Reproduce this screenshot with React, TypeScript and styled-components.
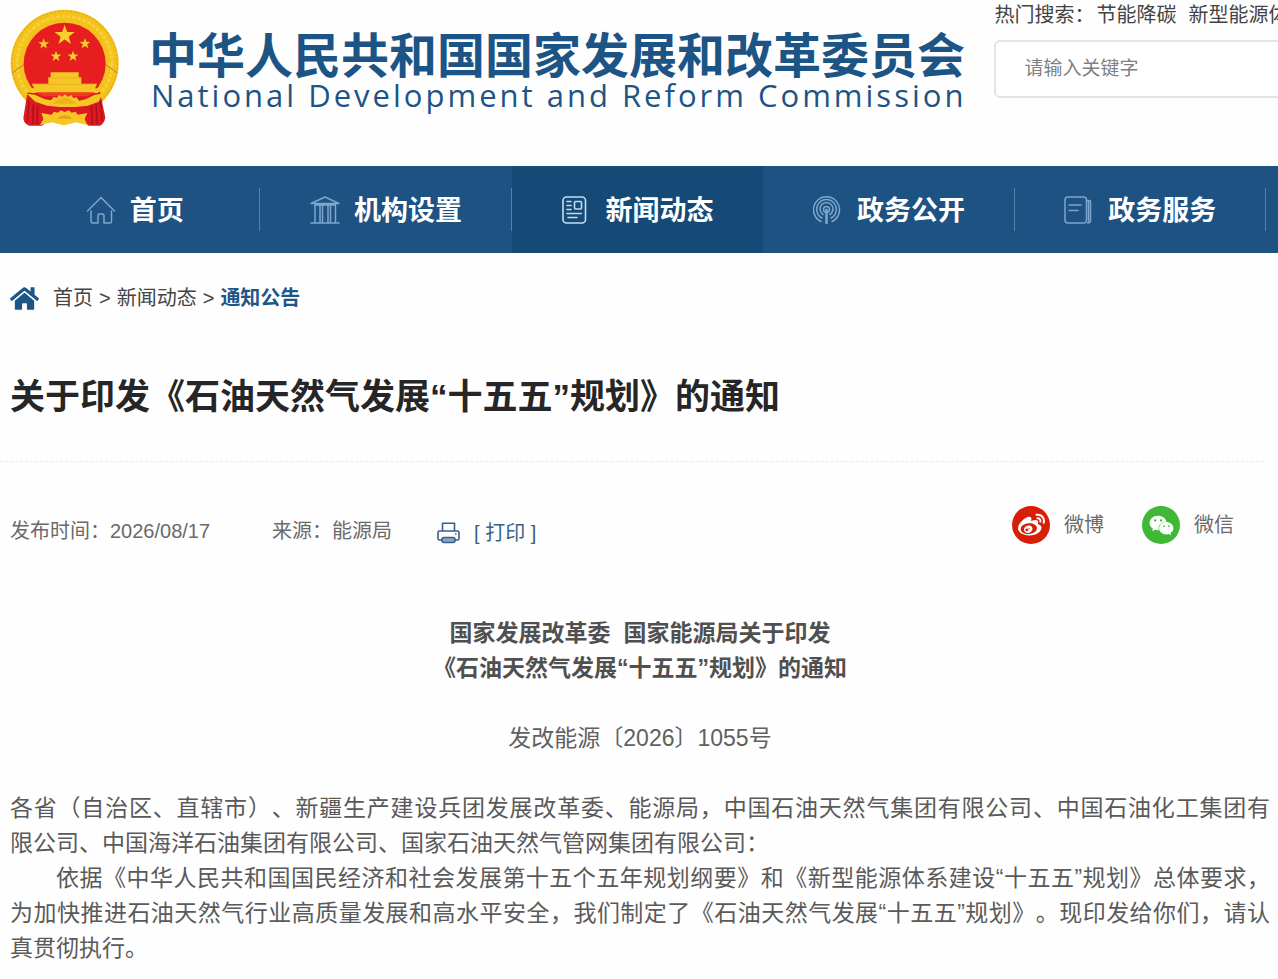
import React from "react";
import styled, { createGlobalStyle } from "styled-components";
import { FaHome, FaWeibo, FaWeixin } from "react-icons/fa";

const GlobalStyle = createGlobalStyle`
  *, *::before, *::after { box-sizing: border-box; }
  body {
    margin: 0;
    background: #fefefe;
    color: #444;
    font-family: "Liberation Sans", "Noto Sans CJK SC", sans-serif;
    text-spacing-trim: space-all;
    overflow-x: hidden;
  }
  a { color: inherit; text-decoration: none; }
  h1, h2, p { margin: 0; }
`;

const Page = styled.div`
  width: 100%;
  overflow: hidden;
`;

const Header = styled.header`
  display: flex;
  align-items: flex-start;
  height: 166px;
  padding-left: 10px;
`;

const Brand = styled.a`
  display: flex;
  flex: none;
  gap: 29px;
  padding-top: 9px;
  color: #1c5486;
`;

const BrandText = styled.div`
  display: flex;
  flex-direction: column;
  padding-top: 22px;
  white-space: nowrap;
`;

const BrandName = styled.span`
  font-size: 48px;
  font-weight: 700;
  line-height: 52px;
`;

const BrandLatin = styled.span`
  padding-left: 2px;
  font-family: "Open Sans", "Noto Sans", sans-serif;
  font-size: 31px;
  line-height: 24px;
  letter-spacing: 3px;
`;

const SearchArea = styled.form`
  flex: 1;
  min-width: 0;
  margin: 2px -10px 0 28px;
`;

const HotWords = styled.div`
  display: flex;
  gap: 12px;
  overflow: hidden;
  font-size: 20px;
  line-height: 26px;
  white-space: nowrap;
  color: #444;
`;

const HotLabel = styled.span`
  margin-right: -10px;
`;

const SearchBox = styled.input`
  display: block;
  width: 100%;
  height: 58px;
  margin-top: 12px;
  padding: 0 28px;
  border: 2px solid #e4e4e4;
  border-radius: 6px;
  background: #fff;
  color: #444;
  font-family: inherit;
  font-size: 19px;
  &::placeholder { color: #808080; opacity: 1; }
`;

const Nav = styled.nav`
  display: flex;
  height: 87px;
  padding: 0 12px 0 9px;
  background: #1d5283;
`;

const NavItem = styled.a<{ $active?: boolean; $divider?: boolean }>`
  position: relative;
  display: flex;
  flex: 1;
  align-items: center;
  justify-content: center;
  gap: 14px;
  background: ${(p) => (p.$active ? "#164a76" : "transparent")};
  color: #fff;
  font-size: 27px;
  font-weight: 700;
  white-space: nowrap;
  svg { color: ${(p) => (p.$active ? "#c3dcf0" : "#7fa6cc")}; }
  &::after {
    content: "";
    display: ${(p) => (p.$divider ? "block" : "none")};
    position: absolute;
    right: 0;
    top: 22px;
    width: 1px;
    height: 43px;
    background: #5482ab;
  }
`;

const NavLabel = styled.span`
  padding-bottom: 3px;
`;

const Main = styled.main`
  padding: 0 8px 12px 10px;
`;

const Breadcrumb = styled.nav`
  display: flex;
  align-items: center;
  gap: 14px;
  padding-top: 30px;
  font-size: 20px;
  line-height: 30px;
  svg { color: #1c5687; }
`;

const Trail = styled.span`
  display: flex;
  gap: 6px;
`;

const Current = styled.a`
  color: #1c5687;
  font-weight: 700;
`;

const Title = styled.h1`
  padding: 58px 0 38px;
  color: #262626;
  font-size: 35px;
  line-height: 52px;
`;

const Rule = styled.hr`
  margin: 0 6px 0 -10px;
  border: 0;
  border-top: 1px dashed #eaeaea;
`;

const MetaBar = styled.div`
  display: flex;
  justify-content: space-between;
  padding-top: 44px;
  font-size: 20px;
  line-height: 38px;
  color: #6a6a6a;
`;

const MetaInfo = styled.div`
  display: flex;
  padding-top: 6px;
`;

const Source = styled.span`
  margin: 0 45px 0 62px;
`;

const PrintButton = styled.button`
  display: flex;
  align-items: center;
  gap: 14px;
  padding: 2px 0 0;
  border: 0;
  background: none;
  color: #3b5f86;
  font: inherit;
`;

const Share = styled.div`
  display: flex;
  gap: 38px;
  padding-right: 36px;
`;

const ShareLink = styled.a`
  display: flex;
  align-items: center;
  height: 38px;
  gap: 14px;
`;

const ShareBadge = styled.span<{ $color: string }>`
  display: flex;
  align-items: center;
  justify-content: center;
  width: 38px;
  height: 38px;
  border-radius: 50%;
  background: ${(p) => p.$color};
  color: #fff;
`;

const DocHeading = styled.h2`
  padding-top: 64px;
  color: #505050;
  font-size: 23px;
  line-height: 35px;
  text-align: center;
`;

const DocNumber = styled.p`
  padding: 35px 0;
  color: #606060;
  font-size: 23px;
  line-height: 35px;
  text-align: center;
`;

const Paragraph = styled.p<{ $indent?: boolean }>`
  color: #5a5a5a;
  font-size: 23px;
  line-height: 35px;
  text-indent: ${(p) => (p.$indent ? "2em" : "0")};
`;

const Line = styled.span<{ $full?: boolean }>`
  display: block;
  text-align: justify;
  text-align-last: ${(p) => (p.$full ? "justify" : "left")};
  & + & { text-indent: 0; }
`;

const star = (cx: number, cy: number, r: number) =>
  Array.from({ length: 10 }, (_, i) => {
    const a = (Math.PI / 5) * i - Math.PI / 2;
    const d = i % 2 ? r * 0.4 : r;
    return `${cx + d * Math.cos(a)},${cy + d * Math.sin(a)}`;
  }).join(" ");

const Emblem = () => (
  <svg width="110" height="118" viewBox="30 24 330 354" aria-hidden="true">
    <ellipse cx="194" cy="187" rx="162" ry="161" fill="#f3c21c" />
    <ellipse cx="194" cy="187" rx="158" ry="157" fill="none" stroke="#e3b01c" strokeWidth="4" strokeDasharray="7 5" />
    <ellipse cx="194" cy="187" rx="142" ry="141" fill="none" stroke="#f7d03a" strokeWidth="9" strokeDasharray="11 5" />
    <path d="M36 216l40-28M352 216l-40-28" stroke="#b98a1a" strokeWidth="3" />
    <ellipse cx="194" cy="188" rx="123" ry="123" fill="#e61e20" />
    <g fill="#f8cf2b">
      <polygon points={star(194, 103, 32)} />
      <polygon points={star(131, 129, 17)} />
      <polygon points={star(255, 128, 17)} />
      <polygon points={star(168, 166, 17)} />
      <polygon points={star(219, 166, 17)} />
    </g>
    <path d="M82 275L70 352q2 18 18 22h38l14-12h112l14 12h34q12-6 16-24l-16-78z" fill="#dc1a22" />
    <path d="M87 300l-5 62M100 310l-2 60M113 314l-2 58M274 314l3 58M288 310l4 60M301 300l6 60" stroke="#a90f1c" strokeWidth="4" />
    <path d="M152 214h84v15h8v19h47l-7 17H104l-9-17h50v-19h7z" fill="#f6c626" />
    <path d="M146 231h97M100 250h190" stroke="#e3a81c" strokeWidth="2" />
    <path d="M86 262h218l-10 14H96z" fill="#f6c626" />
    <path d="M106 274h178l-22 12H128z" fill="#ee3a1d" />
    <path d="M80 278l24 3 31 14 18 3 8-10 10 2 6-8 10 5 8-7 9 7 10-5 6 9 10-2 7 10 20-4 27-14 24-3-12 24-33 12-36 4h-48l-38-4-35-12z" fill="#f6c626" />
    <path d="M158 308q36-36 70 0z" fill="#efb01e" />
    <path d="M124 336l30 5 8-9 12 3 8-7 12 5 12-5 9 7 11-3 8 9 28-5-8 18 8 18-34-8-32 8h-10l-30-8-36 8 10-18z" fill="#f6c626" />
    <path d="M170 353q24-20 48 0z" fill="#e8a01c" />
  </svg>
);

const iconProps = {
  width: 30,
  height: 30,
  viewBox: "0 0 30 30",
  fill: "none",
  stroke: "currentColor",
  strokeWidth: 1.5,
  strokeLinecap: "round" as const,
  strokeLinejoin: "round" as const,
  "aria-hidden": true,
};

const HomeIcon = () => (
  <svg {...iconProps}>
    <path d="M1.5 16L15 2.5 28.500 16M5 16v10.500q0 1.500 1.500 1.500H12v-7.500q0-1.500 1.500-1.500h3q1.500 0 1.500 1.500V28h6q1.500 0 1.500-1.500V16" />
  </svg>
);

const InstitutionIcon = () => (
  <svg {...iconProps}>
    <path d="M15 2L1 8.500h28zM5 9v18M10 9v18M12.500 9v18M18 9v18M20.500 9v18M25.500 9v18M1 28h28M5 10h20" />
  </svg>
);

const NewsIcon = () => (
  <svg {...iconProps} strokeWidth={1.6}>
    <rect x="1" y="2" width="22.500" height="26" rx="3.500" />
    <rect x="12.500" y="6.500" width="7" height="7.500" rx="1" />
    <path d="M5 6.500h4M5 10.500h4M5 14.500h4M5 18.500h14.500M6 22.500h9" />
  </svg>
);

const SignalIcon = () => (
  <svg {...iconProps}>
    <path d="M8 26.500A13 13 0 1 1 19 26.500M9 23A9.800 9.800 0 1 1 18 23M10 19.500A6.500 6.500 0 1 1 17 19.500" />
    <circle cx="13.500" cy="14.500" r="3" />
    <path d="M13.500 15v13" strokeWidth="2.500" />
  </svg>
);

const ServiceIcon = () => (
  <svg {...iconProps}>
    <rect x="1" y="2" width="21.500" height="26" rx="3" />
    <path d="M23 5.500h2q1.500 0 1.500 1.500v18.500q0 2.500-3 2.500M24.500 6v20M5 10h12M5 15.500h9" />
  </svg>
);

const PrinterIcon = () => (
  <svg width="23" height="22" viewBox="0 0 23 22" fill="none" stroke="currentColor" strokeWidth="1.600" strokeLinejoin="round" aria-hidden="true">
    <path d="M5.500 9V1.200h12V9M5 18H2.500Q1 18 1 16.500v-6Q1 9 2.500 9h18q1.500 0 1.500 1.500v6q0 1.500-1.500 1.500H18" />
    <rect x="5" y="15.500" width="13" height="5" rx="2" fill="#8aa5c4" />
    <path d="M18 12h1.500" />
  </svg>
);

const navItems = [
  { label: "首页", Icon: HomeIcon, divider: true },
  { label: "机构设置", Icon: InstitutionIcon, divider: true },
  { label: "新闻动态", Icon: NewsIcon, active: true },
  { label: "政务公开", Icon: SignalIcon, divider: true },
  { label: "政务服务", Icon: ServiceIcon, divider: true },
];

export default function App() {
  return (
    <Page lang="zh-CN">
      <GlobalStyle />
      <Header>
        <Brand href="#">
          <Emblem />
          <BrandText>
            <BrandName>中华人民共和国国家发展和改革委员会</BrandName>
            <BrandLatin lang="en">National Development and Reform Commission</BrandLatin>
          </BrandText>
        </Brand>
        <SearchArea>
          <HotWords>
            <HotLabel>热门搜索：</HotLabel>
            <a href="#">节能降碳</a>
            <a href="#">新型能源体系</a>
          </HotWords>
          <SearchBox type="text" placeholder="请输入关键字" aria-label="请输入关键字" />
        </SearchArea>
      </Header>

      <Nav>
        {navItems.map(({ label, Icon, active, divider }) => (
          <NavItem key={label} href="#" $active={active} $divider={divider}>
            <Icon />
            <NavLabel>{label}</NavLabel>
          </NavItem>
        ))}
      </Nav>

      <Main>
        <Breadcrumb>
          <FaHome size={29} aria-hidden="true" />
          <Trail>
            <a href="#">首页</a>
            <span>&gt;</span>
            <a href="#">新闻动态</a>
            <span>&gt;</span>
            <Current href="#">通知公告</Current>
          </Trail>
        </Breadcrumb>

        <Title>关于印发《石油天然气发展“十五五”规划》的通知</Title>
        <Rule />

        <MetaBar>
          <MetaInfo>
            <span>发布时间：2026/08/17</span>
            <Source>来源：能源局</Source>
            <PrintButton type="button">
              <PrinterIcon />
              [ 打印 ]
            </PrintButton>
          </MetaInfo>
          <Share>
            <ShareLink href="#">
              <ShareBadge $color="#d81e06">
                <FaWeibo size={27} aria-hidden="true" />
              </ShareBadge>
              微博
            </ShareLink>
            <ShareLink href="#">
              <ShareBadge $color="#3eb935">
                <FaWeixin size={25} aria-hidden="true" />
              </ShareBadge>
              微信
            </ShareLink>
          </Share>
        </MetaBar>

        <DocHeading>
          国家发展改革委&nbsp; 国家能源局关于印发
          <br />
          《石油天然气发展“十五五”规划》的通知
        </DocHeading>
        <DocNumber>发改能源〔2026〕1055号</DocNumber>

        <Paragraph>
          <Line $full>各省（自治区、直辖市）、新疆生产建设兵团发展改革委、能源局，中国石油天然气集团有限公司、中国石油化工集团有</Line>
          <Line>限公司、中国海洋石油集团有限公司、国家石油天然气管网集团有限公司：</Line>
        </Paragraph>
        <Paragraph $indent>
          <Line $full>依据《中华人民共和国国民经济和社会发展第十五个五年规划纲要》和《新型能源体系建设“十五五”规划》总体要求，</Line>
          <Line $full>为加快推进石油天然气行业高质量发展和高水平安全，我们制定了《石油天然气发展“十五五”规划》。现印发给你们，请认</Line>
          <Line>真贯彻执行。</Line>
        </Paragraph>
      </Main>
    </Page>
  );
}
